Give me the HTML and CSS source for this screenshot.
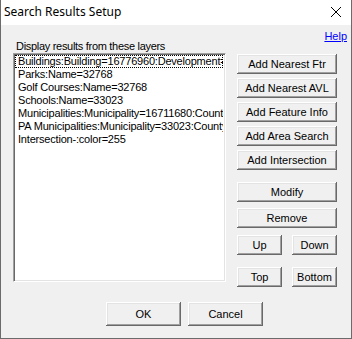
FILE: index.html
```html
<!DOCTYPE html>
<html lang="en">
<head>
    <meta charset="UTF-8">
    <title>Search Results Setup</title>
    <link rel="stylesheet" href="styles.css">
</head>
<body>
<div class="dialog">
    <div class="titlebar">
        <span class="title">Search Results Setup</span>
        <svg class="close" width="12" height="12" viewBox="0 0 12 12">
            <path d="M1 1 L11 11 M11 1 L1 11" stroke="#000" stroke-width="1" fill="none"/>
        </svg>
    </div>
    <div class="content">
        <div class="head">
            <div class="label">Display results from these layers</div>
            <a class="help" href="#">Help</a>
        </div>
        <div class="main">
            <div class="listbox">
                <div class="item focused">Buildings:Building=16776960:Development=16711680</div>
                <div class="item">Parks:Name=32768</div>
                <div class="item">Golf Courses:Name=32768</div>
                <div class="item">Schools:Name=33023</div>
                <div class="item">Municipalities:Municipality=16711680:County=255</div>
                <div class="item">PA Municipalities:Municipality=33023:County=255</div>
                <div class="item">Intersection-:color=255</div>
            </div>
            <div class="actions">
                <button class="btn">Add Nearest Ftr</button>
                <button class="btn">Add Nearest AVL</button>
                <button class="btn">Add Feature Info</button>
                <button class="btn">Add Area Search</button>
                <button class="btn">Add Intersection</button>
                <button class="btn modify">Modify</button>
                <button class="btn remove">Remove</button>
                <div class="pair updown">
                    <button class="btn">Up</button>
                    <button class="btn">Down</button>
                </div>
                <div class="pair topbottom">
                    <button class="btn">Top</button>
                    <button class="btn">Bottom</button>
                </div>
            </div>
        </div>
        <div class="footer">
            <button class="btn big">OK</button>
            <button class="btn big">Cancel</button>
        </div>
    </div>
</div>
</body>
</html>
```

FILE: styles.css
```css
body {
    margin: 0;
    background: #f0f0f0;
    font-family: "Liberation Sans", Arial, sans-serif;
    font-size: 11px;
    color: #000;
}

.dialog {
    width: 350px;
    height: 338px;
    background: #f0f0f0;
    border: 1px solid #6b6b6b;
    border-top: 0;
}

.titlebar {
    height: 25px;
    background: #fff;
    display: flex;
    align-items: center;
    justify-content: space-between;
    padding: 0 9px 0 3px;
}
.title {
    font-family: "Noto Sans", sans-serif;
    font-size: 12px;
    position: relative;
    top: -1px;
}
.close {
    position: relative;
    top: -1px;
}

.content {
    padding: 5px 4px 0 12px;
}

.head {
    display: flex;
    justify-content: space-between;
    height: 23px;
}
.label {
    align-self: flex-end;
    line-height: 13px;
    margin-left: 3px;
    letter-spacing: -0.3px;
}
.help {
    color: #0000ff;
    line-height: 13px;
    height: 13px;
}

.main {
    display: flex;
    gap: 11px;
}

.listbox {
    width: 209px;
    height: 225px;
    background: #fff;
    border: 1px solid;
    border-color: #a0a0a0 #fff #fff #a0a0a0;
    box-shadow: inset 1px 1px #696969, inset -1px -1px #e3e3e3;
    padding: 1px;
    overflow: hidden;
}
.item {
    height: 13px;
    line-height: 13px;
    padding-left: 3px;
    white-space: nowrap;
    overflow: hidden;
    margin-right: 1px;
    letter-spacing: -0.2px;
}
.focused {
    outline: 1px dotted #000;
    outline-offset: -1px;
}

.actions {
    width: 100px;
    display: flex;
    flex-direction: column;
    gap: 4px;
    padding-top: 1px;
}

.btn {
    font-family: "Liberation Sans", Arial, sans-serif;
    font-size: 11px;
    color: #000;
    background: #f0f0f0;
    border: 0;
    padding: 0;
    height: 20px;
    white-space: nowrap;
    box-shadow: inset -1px -1px #696969, inset 1px 1px #fff, inset -2px -2px #a0a0a0, inset 2px 2px #e3e3e3;
}

.modify { margin-top: 8px; }
.remove { margin-top: 2px; }

.pair {
    display: flex;
    justify-content: space-between;
}
.pair .btn { width: 45px; }
.updown { margin-top: 3px; }
.topbottom { margin-top: 8px; }

.footer {
    display: flex;
    gap: 7px;
    margin-top: 15px;
    padding-left: 93px;
}
.btn.big {
    width: 75px;
    height: 24px;
}
```
